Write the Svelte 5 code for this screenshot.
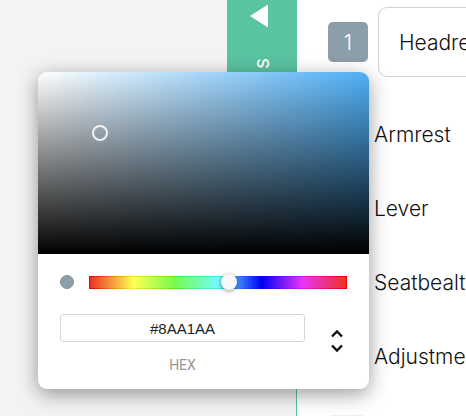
<script>
  const parts = ['Armrest', 'Lever', 'Seatbealt', 'Adjustment'];
  let hue = $state(197);
  let hex = $state('#8AA1AA');
</script>

<div class="page">
  <aside>
    <button class="tab" aria-label="Collapse parts panel">
      <svg width="20" height="24" viewBox="0 0 20 24" aria-hidden="true"><path d="M1 12 19 0.5v23z" fill="#fff" /></svg>
      <span>s</span>
    </button>
  </aside>

  <main>
    <div class="current">
      <button class="number">1</button>
      <input class="name" aria-label="Part name" value="Headrest" />
    </div>
    <ul>
      {#each parts as part}
        <li>{part}</li>
      {/each}
    </ul>
    <div class="next"></div>
  </main>

  <section class="picker" aria-label="Colour picker">
    <div class="saturation"><div class="pointer"></div></div>
    <div class="controls">
      <div class="hue">
        <span class="swatch"></span>
        <input type="range" min="0" max="360" aria-label="Hue" bind:value={hue} />
      </div>
      <div class="fields">
        <div class="field">
          <input id="hex" bind:value={hex} />
          <label for="hex">HEX</label>
        </div>
        <button class="switch" aria-label="Change colour format">
          <svg width="12" height="24" viewBox="0 0 12 24" fill="none" stroke="#111" stroke-width="2.4" aria-hidden="true">
            <path d="M1 7.5 6 2.5l5 5M1 16.5l5 5 5-5" />
          </svg>
        </button>
      </div>
    </div>
  </section>
</div>

<style>
  :global(body) {
    margin: 0;
  }
  .page {
    position: relative;
    display: flex;
    height: 100vh;
    overflow: hidden;
    background: #fff;
    color: #111;
    font-family: Inter, "Liberation Sans", sans-serif;
    font-weight: 300;
  }
  button,
  input {
    box-sizing: border-box;
    margin: 0;
    font-family: inherit;
    font-weight: inherit;
  }
  button {
    border: 0;
    padding: 0;
  }
  aside {
    display: flex;
    flex: 0 0 296px;
    align-items: flex-start;
    justify-content: flex-end;
    background: #f3f3f3;
    border-right: 1px solid #5ac3a2;
  }
  .tab {
    display: flex;
    flex-direction: column;
    align-items: center;
    gap: 30px;
    width: 69px;
    height: 120px;
    padding-top: 4px;
    background: #5ac3a2;
    color: #fff;
    font-size: 21px;
    font-weight: 400;
    line-height: 20px;
  }
  .tab svg {
    margin-right: 6px;
  }
  .tab span {
    writing-mode: vertical-rl;
    transform: rotate(180deg);
  }
  main {
    flex: 1;
    min-width: 0;
    padding: 7px 0 0 31px;
    font-size: 21px;
  }
  .current {
    display: flex;
    align-items: center;
    gap: 10px;
    margin-bottom: 21px;
  }
  .number {
    flex: 0 0 40px;
    height: 40px;
    border-radius: 5px;
    background: #8c9ea8;
    color: #fff;
    font-size: 21px;
  }
  .name {
    flex: 0 0 240px;
    height: 70px;
    padding: 0 20px;
    border: 1px solid #d2d2d2;
    border-radius: 9px;
    background: #fff;
    color: #111;
    font-size: 21px;
  }
  ul {
    margin: 0;
    padding: 0 0 0 46px;
    list-style: none;
  }
  li {
    line-height: 74px;
    white-space: nowrap;
  }
  .next {
    width: 40px;
    height: 40px;
    margin-top: 21px;
    border-radius: 5px;
    background: #f0f0f8;
  }
  .picker {
    position: absolute;
    left: 38px;
    top: 72px;
    width: 331px;
    overflow: hidden;
    border-radius: 9px;
    background: #fff;
    box-shadow: 0 5px 20px rgba(0, 0, 0, 0.4);
    font-weight: 400;
  }
  .saturation {
    position: relative;
    height: 182px;
    background: linear-gradient(to top, #000, transparent), linear-gradient(to right, #fff, #4eaff6);
  }
  .pointer {
    position: absolute;
    left: 54px;
    top: 53px;
    box-sizing: border-box;
    width: 16px;
    height: 16px;
    border: 2px solid rgba(255, 255, 255, 0.85);
    border-radius: 50%;
  }
  .controls {
    padding: 20px 22px 15px;
  }
  .hue {
    display: flex;
    align-items: center;
    gap: 15px;
    height: 16px;
  }
  .swatch {
    box-sizing: border-box;
    flex: 0 0 14px;
    height: 14px;
    border: 1px solid #7d929c;
    border-radius: 50%;
    background: #8c9ea8;
  }
  .hue input {
    flex: 1;
    min-width: 0;
    height: 13px;
    appearance: none;
    background:
      linear-gradient(to right, #eb3323, #ffff54 17%, #75fb4c 33%, #73fbfd 50%, #0000f5 67%, #ea33f7 83%, #eb3323) center / calc(100% - 2px) 11px no-repeat,
      linear-gradient(to right, #e00000, #f5e83a 17%, #55ee20 33%, #55e8ea 50%, #0000e8 67%, #dd20ea 83%, #f00000);
  }
  .hue input::-webkit-slider-thumb {
    appearance: none;
    width: 16px;
    height: 16px;
    border-radius: 50%;
    background: #f8f8f8;
    box-shadow: 0 1px 4px rgba(0, 0, 0, 0.4);
  }
  .fields {
    display: flex;
    gap: 26px;
    margin-top: 24px;
  }
  .field {
    display: flex;
    flex: 1;
    flex-direction: column;
    gap: 14px;
    text-align: center;
  }
  .field input {
    width: 100%;
    height: 28px;
    padding: 0;
    border: 1px solid #d8d8d8;
    border-radius: 3px;
    background: #fff;
    color: #222;
    font-family: "Liberation Sans", sans-serif;
    font-size: 15px;
    text-align: center;
  }
  .field label {
    color: #969696;
    font-family: Roboto, sans-serif;
    font-size: 14px;
    line-height: 18px;
  }
  .switch {
    display: flex;
    align-items: flex-start;
    width: 16px;
    padding-top: 15px;
    background: none;
  }
</style>
